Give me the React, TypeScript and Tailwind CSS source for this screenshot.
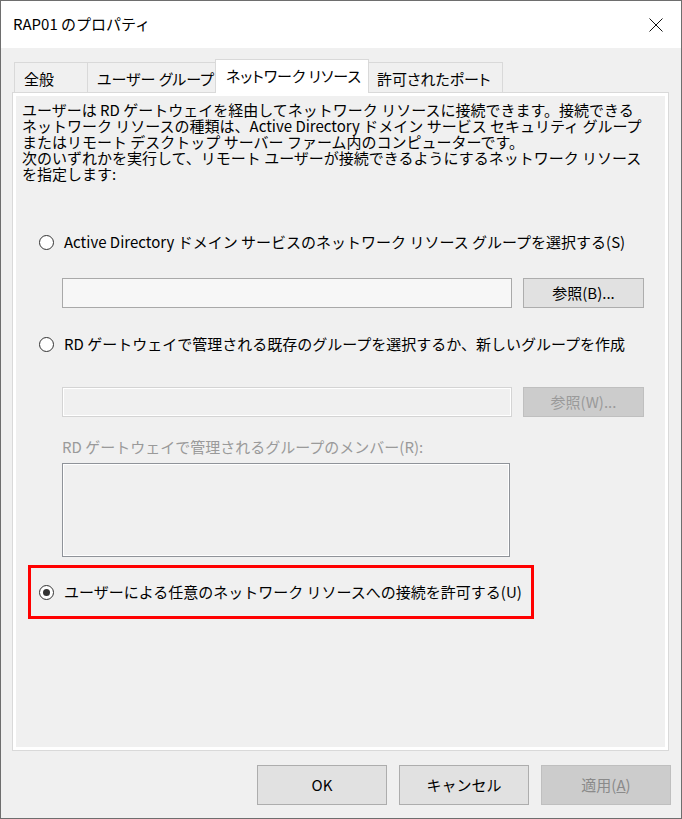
import React from "react";

const font = "font-['Noto_Sans_CJK_JP','Noto_Sans_CJK_SC',sans-serif]";

function Radio({ checked }: { checked?: boolean }) {
  return (
    <span className="flex h-[15px] w-[15px] shrink-0 items-center justify-center rounded-full border border-[#333333] bg-white">
      {checked && <span className="h-[7px] w-[7px] rounded-full bg-[#333333]" />}
    </span>
  );
}

function Tab({ label, w, active }: { label: string; w: string; active?: boolean }) {
  if (active) {
    return (
      <div
        className={`relative z-10 -ml-[2px] -mr-[1px] flex h-[34px] ${w} items-start whitespace-nowrap border border-b-0 border-[#d9d9d9] bg-white pl-[10px] pt-[5px] text-[15px] text-black [font-feature-settings:'palt']`}
      >
        {label}
      </div>
    );
  }
  return (
    <div
      className={`-ml-px flex h-[31px] ${w} items-start whitespace-nowrap border border-b-0 border-[#d9d9d9] bg-[#f0f0f0] pl-[9px] pt-[5px] text-[15px] text-black first:ml-0 [font-feature-settings:'palt']`}
    >
      {label}
    </div>
  );
}

export default function App() {
  return (
    <div
      className={`${font} flex h-[819px] w-[682px] flex-col border border-[#6e6e6e] bg-[#f0f0f0] text-black`}
    >
      {/* title bar */}
      <div className="flex h-[47px] shrink-0 items-center justify-between bg-white pl-3 pr-[18px]">
        <span className="text-[15px]">RAP01 のプロパティ</span>
        <svg width="14" height="14" viewBox="0 0 14 14">
          <path d="M0.5 0.5 L13.5 13.5 M13.5 0.5 L0.5 13.5" stroke="#111" strokeWidth="1" />
        </svg>
      </div>

      {/* body */}
      <div className="flex flex-1 flex-col pt-[11px]">
        {/* tabs */}
        <div className="flex h-[34px] items-end pl-[13px]">
          <Tab label="全般" w="w-[74px]" />
          <Tab label="ユーザー グループ" w="w-[130px]" />
          <Tab label="ネットワーク リソース" w="w-[154px]" active />
          <Tab label="許可されたポート" w="w-[136px]" />
        </div>

        {/* panel */}
        <div className="ml-[11px] mr-[12px] -mt-px h-[659px] border border-[#d9d9d9]">
          <div className="flex h-full flex-col border-[3px] border-white bg-[#f0f0f0]">
            <p className="ml-[6px] mt-[6px] whitespace-nowrap text-[15px] leading-[16px]">
              ユーザーは RD ゲートウェイを経由してネットワーク リソースに接続できます。接続できる
              <br />
              ネットワーク リソースの種類は、Active Directory ドメイン サービス セキュリティ グループ
              <br />
              またはリモート デスクトップ サーバー ファーム内のコンピューターです。
              <br />
              次のいずれかを実行して、リモート ユーザーが接続できるようにするネットワーク リソース
              <br />
              を指定します:
            </p>

            <div className="ml-[23px] mt-[50px] flex h-[20px] items-center gap-[10px] text-[15px]">
              <Radio />
              <span>Active Directory ドメイン サービスのネットワーク リソース グループを選択する(S)</span>
            </div>

            <div className="ml-[46px] mt-[26px] flex h-[30px] gap-[11px]">
              <div className="h-full w-[450px] border border-[#a9a9a9] bg-[#f7f7f7]" />
              <button className="h-full w-[121px] border border-[#adadad] bg-[#e1e1e1] text-[15px]">
                参照(B)...
              </button>
            </div>

            <div className="ml-[23px] mt-[26px] flex h-[20px] items-center gap-[10px] text-[15px]">
              <Radio />
              <span>RD ゲートウェイで管理される既存のグループを選択するか、新しいグループを作成</span>
            </div>

            <div className="ml-[46px] mt-[33px] flex h-[30px] gap-[11px]">
              <div className="h-full w-[450px] border border-[#d4d4d4] bg-[#f0f0f0] shadow-[inset_0_0_0_1px_#ffffff]" />
              <button className="h-full w-[121px] border border-[#bfbfbf] bg-[#cccccc] text-[15px] text-[#9a9a9a]">
                参照(W)...
              </button>
            </div>

            <div className="ml-[46px] mt-[21px] h-[18px] text-[15px] leading-[18px] text-[#9a9a9a]">
              RD ゲートウェイで管理されるグループのメンバー(R):
            </div>

            <div className="ml-[46px] mt-[7px] h-[94px] w-[448px] border border-[#8f9399] bg-[#f0f0f0] shadow-[inset_0_0_0_1px_#ffffff]" />

            <div className="ml-[12px] mt-[8px] flex h-[54px] w-[506px] items-center gap-[10px] border-[3px] border-[#ff0000] pl-[8px] text-[15px]">
              <Radio checked />
              <span>ユーザーによる任意のネットワーク リソースへの接続を許可する(U)</span>
            </div>
          </div>
        </div>

        {/* dialog buttons */}
        <div className="mr-[10px] mt-[14px] flex justify-end gap-[12px]">
          <button className="h-[40px] w-[130px] border border-[#adadad] bg-[#e1e1e1] text-[15px]">OK</button>
          <button className="h-[40px] w-[130px] border border-[#adadad] bg-[#e1e1e1] text-[15px]">キャンセル</button>
          <button className="h-[40px] w-[130px] border border-[#bfbfbf] bg-[#cccccc] text-[15px] text-[#8a8a8a]">
            適用(<span className="underline">A</span>)
          </button>
        </div>
      </div>
    </div>
  );
}
